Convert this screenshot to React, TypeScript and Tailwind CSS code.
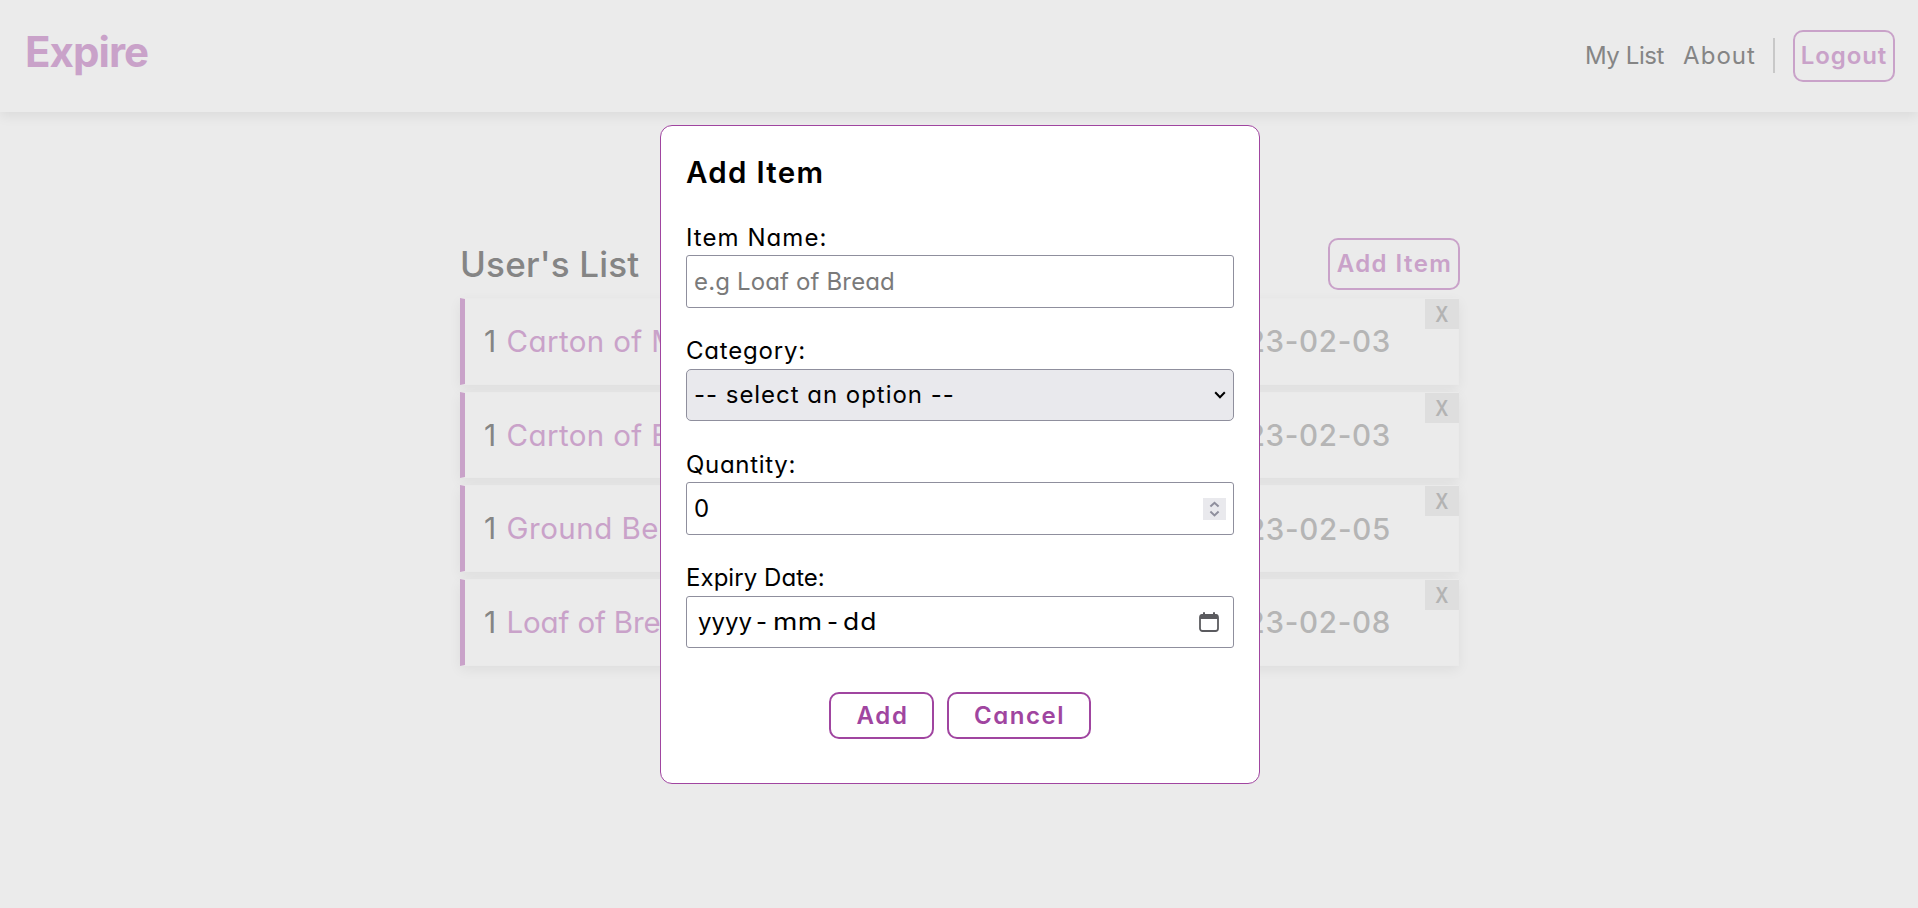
import type { ReactNode } from "react";

type Item = { qty: number; name: string; date: string; spacing: string };

const items: Item[] = [
  { qty: 1, name: "Carton of Milk", date: "2023-02-03", spacing: "tracking-[0.4px]" },
  { qty: 1, name: "Carton of Eggs", date: "2023-02-03", spacing: "tracking-[0.4px]" },
  { qty: 1, name: "Ground Beef", date: "2023-02-05", spacing: "tracking-[0.5px]" },
  { qty: 1, name: "Loaf of Bread", date: "2023-02-08", spacing: "tracking-[-0.15px]" },
];

function Header() {
  return (
    <header className="flex h-[112px] items-center justify-between bg-[#ebebeb] pr-[23px] pl-[25px] shadow-[0_4px_12px_rgba(0,0,0,0.07)]">
      <h1 className="pb-[9px] text-[42px] leading-none font-bold tracking-[-0.95px] text-[#c9a2c9]">Expire</h1>
      <nav className="flex items-center text-[24px] text-[#858585]">
        <a className="mr-[19px] pb-px tracking-[-0.4px]">My List</a>
        <a className="mr-[17px] pb-px tracking-[1.05px]">About</a>
        <span className="mr-[18px] mb-px h-[35px] w-[2px] bg-[#c8c8c8]" />
        <button className="h-[52px] w-[102px] rounded-[10px] border-2 border-[#c9a2c9] pb-px font-semibold tracking-[0.9px] text-[#c9a2c9]">
          Logout
        </button>
      </nav>
    </header>
  );
}

function Row({ item }: { item: Item }) {
  return (
    <li className="relative mr-px flex h-[86.6px] items-center justify-between border border-l-[5px] border-[#eaeaea] border-l-[#c9a2c9] bg-[#ebebeb] pr-[67px] pl-[19px] text-[29.5px] whitespace-nowrap shadow-[0_4px_12px_rgba(0,0,0,0.06)]">
      <span className="flex items-baseline">
        <span className="w-[22.5px] text-[30px] text-[#858585]">{item.qty}</span>
        <span className={`text-[#c9a2c9] ${item.spacing}`}>{item.name}</span>
      </span>
      <span className="font-medium tracking-[0.7px] text-[#b5b5b5]">{item.date}</span>
      <button className="absolute top-0 -right-px flex h-[30px] w-[34px] items-center justify-center bg-[#dedede] text-[21.5px] font-semibold text-[#b3b3b3]">
        <span className="inline-block scale-x-[0.85]">X</span>
      </button>
    </li>
  );
}

function Field({ label, spacing, className, children }: { label: string; spacing: string; className: string; children: ReactNode }) {
  return (
    <div>
      <div className={`flex items-center ${className}`}>
        <label className={spacing}>{label}</label>
      </div>
      {children}
    </div>
  );
}

function AddItemDialog() {
  return (
    <div className="absolute top-[125px] left-[660px] h-[659px] w-[600px] rounded-[12px] border border-[#a045a0] bg-white px-[25px] text-[24px] text-black">
      <h2 className="flex h-[94px] items-center pb-[2px] text-[29.5px] font-semibold tracking-[1.3px]">Add Item</h2>

      <Field label="Item Name:" spacing="tracking-[1.05px]" className="h-[35px]">
        <input
          className="block h-[53px] w-full rounded-[3px] border border-[#8f8f9d] px-[7px] tracking-[0.15px] outline-none placeholder:text-[#7a7a7a]"
          placeholder="e.g Loaf of Bread"
        />
      </Field>

      <div className="h-[25px]" />
      <Field label="Category:" spacing="tracking-[0.8px]" className="h-[36px]">
        <div className="flex h-[52px] items-center justify-between rounded-[5px] border border-[#8f8f9d] bg-[#e9e9ed] pr-[7px] pl-[7px]">
          <span className="tracking-[0.97px]">-- select an option --</span>
          <svg className="h-[8px] w-[12px]" viewBox="0 0 12 8" fill="none" stroke="#000" strokeWidth="2">
            <path d="M1.2 1.2 6 6.2l4.8-5" />
          </svg>
        </div>
      </Field>

      <div className="h-[26px]" />
      <Field label="Quantity:" spacing="tracking-[0.7px]" className="h-[35px]">
        <div className="flex h-[53px] items-center justify-between rounded-[3px] border border-[#8f8f9d] pr-[7px] pl-[7px]">
          <span>0</span>
          <svg className="h-[22px] w-[23px]" viewBox="0 0 23 22" fill="none" stroke="#8f8f9d" strokeWidth="2">
            <rect width="23" height="22" fill="#e9e9ed" stroke="none" />
            <path d="M7.4 8.6 11.5 4.8l4.1 3.8M7.4 13.6l4.1 3.8 4.1-3.8" />
          </svg>
        </div>
      </Field>

      <div className="h-[25px]" />
      <Field label="Expiry Date:" spacing="tracking-[0.05px]" className="h-[36px]">
        <div className="flex h-[52px] items-center justify-between rounded-[3px] border border-[#8f8f9d] pr-[14px] pl-[11px]">
          <span className="flex">
            <span className="w-[58px]">yyyy</span>
            <span className="w-[17px]">-</span>
            <span className="w-[54px] origin-left scale-x-[1.16] tracking-[0.3px]">mm</span>
            <span className="w-[16px]">-</span>
            <span className="origin-left scale-x-110 tracking-[1px]">dd</span>
          </span>
          <svg className="h-[20px] w-[20px]" viewBox="0 0 20 20" fill="none">
            <rect x="1" y="3" width="18" height="16" rx="2.5" stroke="#5b5b5f" strokeWidth="1.8" />
            <path d="M1 7V5a3 3 0 0 1 3-3V.2h2V2h8V.2h2V2a3 3 0 0 1 3 3v2z" fill="#5b5b5f" />
          </svg>
        </div>
      </Field>

      <div className="mt-[44px] flex justify-center gap-[13px] font-semibold text-[#a045a0]">
        <button className="h-[47px] w-[105px] rounded-[10px] border-2 border-[#a045a0] pl-[2px] tracking-[1.7px]">Add</button>
        <button className="h-[47px] w-[144px] rounded-[10px] border-2 border-[#a045a0] pl-px tracking-[1.55px]">Cancel</button>
      </div>
    </div>
  );
}

export default function App() {
  return (
    <div className="relative h-[908px] w-[1918px] overflow-hidden bg-[#ebebeb] font-['Inter','Liberation_Sans',sans-serif] [font-feature-settings:'cv11']">
      <Header />
      <main className="ml-[460px] w-[1000px] pt-[126px]">
        <div className="mb-[8.2px] flex h-[52px] items-center justify-between">
          <h2 className="text-[35px] leading-[52px] font-medium tracking-[0.2px] text-[#858585]">User's List</h2>
          <button className="h-[52px] w-[132px] rounded-[10px] border-2 border-[#c9a2c9] pl-px text-[24px] font-semibold tracking-[1.45px] whitespace-nowrap text-[#c9a2c9]">
            Add Item
          </button>
        </div>
        <ul className="flex flex-col gap-[7px]">
          {items.map((item) => (
            <Row key={item.name} item={item} />
          ))}
        </ul>
      </main>
      <AddItemDialog />
    </div>
  );
}
